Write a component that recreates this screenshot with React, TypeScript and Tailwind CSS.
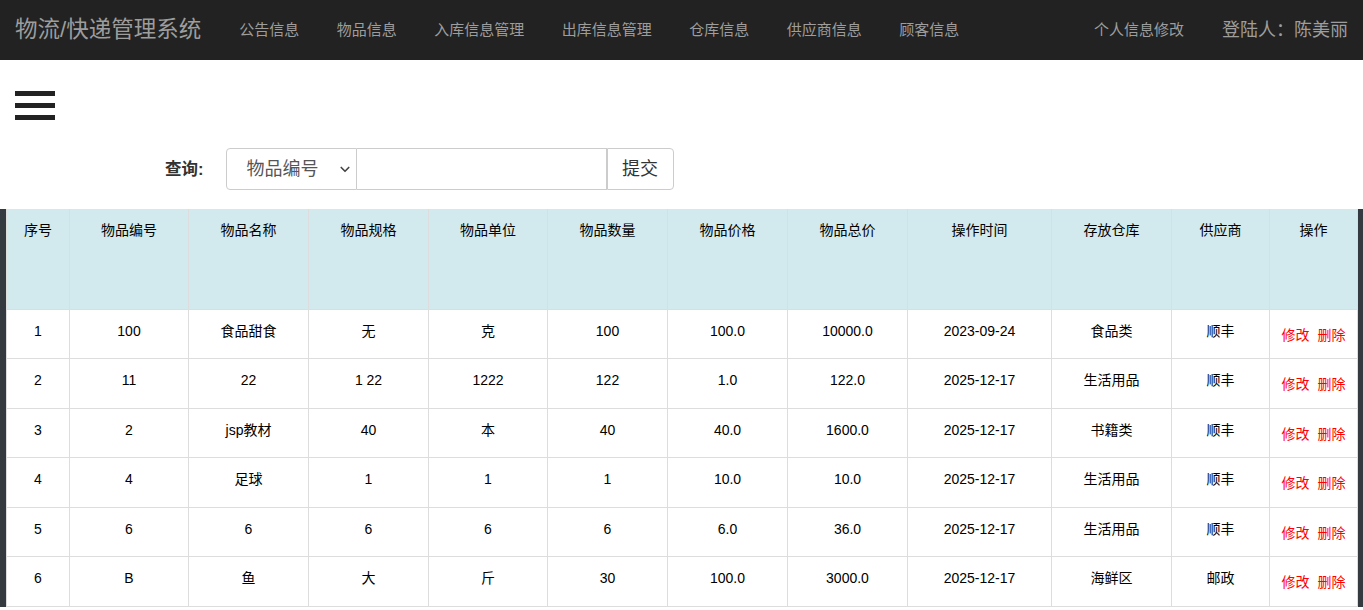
import * as React from 'react';

type Goods = {
  id: number;
  code: string;
  name: string;
  spec: string;
  unit: string;
  qty: string;
  price: string;
  total: string;
  time: string;
  store: string;
  supplier: string;
};

const rows: Goods[] = [
  { id: 1, code: '100', name: '食品甜食', spec: '无', unit: '克', qty: '100', price: '100.0', total: '10000.0', time: '2023-09-24', store: '食品类', supplier: '顺丰' },
  { id: 2, code: '11', name: '22', spec: '1 22', unit: '1222', qty: '122', price: '1.0', total: '122.0', time: '2025-12-17', store: '生活用品', supplier: '顺丰' },
  { id: 3, code: '2', name: 'jsp教材', spec: '40', unit: '本', qty: '40', price: '40.0', total: '1600.0', time: '2025-12-17', store: '书籍类', supplier: '顺丰' },
  { id: 4, code: '4', name: '足球', spec: '1', unit: '1', qty: '1', price: '10.0', total: '10.0', time: '2025-12-17', store: '生活用品', supplier: '顺丰' },
  { id: 5, code: '6', name: '6', spec: '6', unit: '6', qty: '6', price: '6.0', total: '36.0', time: '2025-12-17', store: '生活用品', supplier: '顺丰' },
  { id: 6, code: 'B', name: '鱼', spec: '大', unit: '斤', qty: '30', price: '100.0', total: '3000.0', time: '2025-12-17', store: '海鲜区', supplier: '邮政' },
];

const navLinks = ['公告信息', '物品信息', '入库信息管理', '出库信息管理', '仓库信息', '供应商信息', '顾客信息'];

const columns: { label: string; width: string }[] = [
  { label: '序号', width: 'w-[63px]' },
  { label: '物品编号', width: 'w-[119px]' },
  { label: '物品名称', width: 'w-[120px]' },
  { label: '物品规格', width: 'w-[120px]' },
  { label: '物品单位', width: 'w-[119px]' },
  { label: '物品数量', width: 'w-[120px]' },
  { label: '物品价格', width: 'w-[120px]' },
  { label: '物品总价', width: 'w-[120px]' },
  { label: '操作时间', width: 'w-[144px]' },
  { label: '存放仓库', width: 'w-[120px]' },
  { label: '供应商', width: 'w-[98px]' },
  { label: '操作', width: 'w-[88px]' },
];

const Navbar: React.FC = () => (
  <nav className="flex h-[60px] items-center bg-[#222222] pl-[15px] pr-[15px] text-[#9d9d9d]">
    <span className="text-[22.5px] leading-none">物流/快递管理系统</span>
    <ul className="ml-[38px] flex items-center gap-[37.5px] text-[15px]">
      {navLinks.map((link) => (
        <li key={link}>{link}</li>
      ))}
    </ul>
    <div className="ml-auto flex items-center gap-[38px]">
      <span className="text-[15px]">个人信息修改</span>
      <span className="text-[18px]">登陆人：陈美丽</span>
    </div>
  </nav>
);

const SearchBar: React.FC = () => (
  <div className="flex items-center pl-[165px]">
    <span className="text-[16.5px] font-bold text-[#333333]">查询:</span>
    <div className="ml-[22px] flex h-[42px]">
      <div className="relative h-full w-[131px] rounded-l-[4px] border border-[#cccccc] bg-white">
        <span className="absolute left-[20px] top-1/2 -translate-y-1/2 text-[18px] text-[#555555]">物品编号</span>
        <svg className="absolute right-[5px] top-1/2 h-[12px] w-[12px] -translate-y-1/2" viewBox="0 0 16 16" fill="none">
          <path d="M3 6l5 5 5-5" stroke="#444444" strokeWidth="2.2" strokeLinecap="round" strokeLinejoin="round" />
        </svg>
      </div>
      <input className="h-full w-[250px] border border-l-0 border-[#cccccc] bg-white outline-none" />
      <button className="h-full w-[67px] rounded-r-[4px] border border-[#cccccc] bg-white text-[18px] text-[#333333]">
        提交
      </button>
    </div>
  </div>
);

const DataTable: React.FC = () => (
  <div className="bg-[#343a40] px-[6px]">
    <table className="w-full table-fixed border-collapse bg-white text-center text-[14px] text-black">
      <thead>
        <tr className="h-[100px] bg-[#d2e9ee]">
          {columns.map((col) => (
            <th key={col.label} className={`${col.width} border border-t-0 border-[#dddddd] pt-[11px] align-top font-normal leading-[20px]`}>
              {col.label}
            </th>
          ))}
        </tr>
      </thead>
      <tbody>
        {rows.map((r) => (
          <tr key={r.id} className="h-[49.6px]">
            {[r.id, r.code, r.name, r.spec, r.unit, r.qty, r.price, r.total, r.time, r.store, r.supplier].map((v, i) => (
              <td key={i} className="border border-[#dddddd] pt-[11px] align-top leading-[20px] text-black">
                {v}
              </td>
            ))}
            <td className="border border-[#dddddd] pt-[15px] align-top leading-[20px] text-[#ff0000]">
              修改&nbsp; 删除
            </td>
          </tr>
        ))}
      </tbody>
    </table>
  </div>
);

export default function App() {
  return (
    <div className="min-h-screen bg-white font-['Liberation_Sans','Noto_Sans_CJK_SC',sans-serif]">
      <Navbar />
      <div className="px-[15px] pt-[31px]">
        <div className="flex w-[40px] flex-col gap-[7px]">
          <span className="block h-[5px] bg-[#222222]" />
          <span className="block h-[5px] bg-[#222222]" />
          <span className="block h-[5px] bg-[#222222]" />
        </div>
      </div>
      <div className="pt-[28px]">
        <SearchBar />
      </div>
      <div className="pt-[19px]">
        <DataTable />
      </div>
    </div>
  );
}
